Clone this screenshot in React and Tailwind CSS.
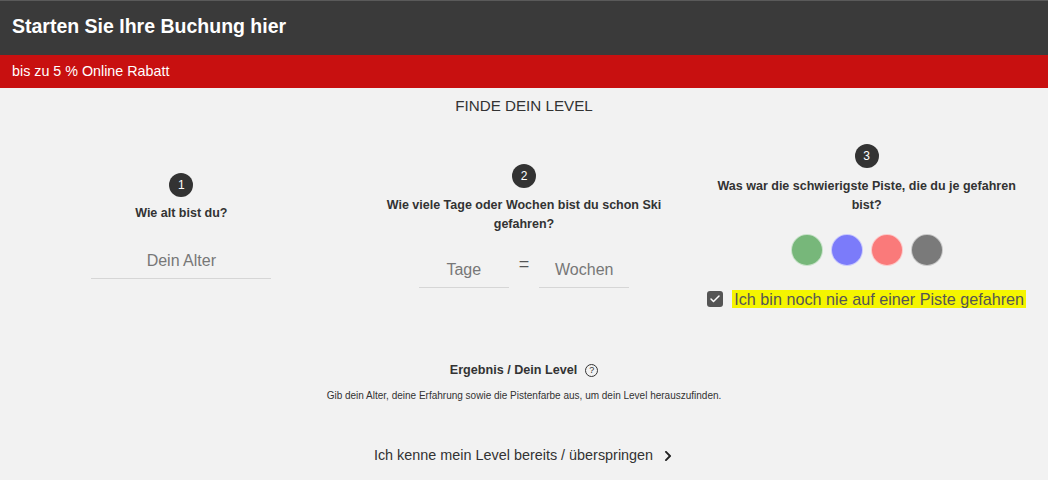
import { Check } from "lucide-react";
import { FaChevronRight } from "react-icons/fa";

const PISTEN = ["bg-[#77b77a]", "bg-[#7b7bfa]", "bg-[#fa7a7a]", "bg-[#7a7a7a]"];

function Badge({ n }) {
  return (
    <div className="w-6 h-6 rounded-full bg-[#333] text-white text-[12px] flex items-center justify-center mx-auto">
      {n}
    </div>
  );
}

function Field({ placeholder, width }) {
  return (
    <input
      className={`${width} h-9 bg-transparent border-b border-[#d6d6d6] text-center text-[16px] text-[#555] placeholder-[#777] outline-none`}
      placeholder={placeholder}
    />
  );
}

export default function App() {
  return (
    <div className="min-h-screen bg-[#f2f2f2] font-['Liberation_Sans',Arial,sans-serif] text-[#333]">
      <div className="h-[55px] bg-[#3a3a3a] border-t border-[#5a5a5a] flex items-center px-3 pb-[3px]">
        <h1 className="text-white text-[19.5px] font-bold">Starten Sie Ihre Buchung hier</h1>
      </div>
      <div className="h-[33px] bg-[#c81010] flex items-center px-3">
        <span className="text-white text-[14.3px]">bis zu 5 % Online Rabatt</span>
      </div>

      <div className="text-center text-[15.2px] text-[#333] mt-[10px] leading-4">FINDE DEIN LEVEL</div>

      <div className="grid grid-cols-3 items-center px-[10px] mt-[21px] h-[182px]">
        {/* Alter */}
        <div className="text-center">
          <Badge n={1} />
          <p className="text-[12.5px] font-bold mt-[8px] leading-4">Wie alt bist du?</p>
          <div className="flex justify-center mt-[22px]">
            <Field placeholder="Dein Alter" width="w-[180px]" />
          </div>
        </div>

        {/* Erfahrung */}
        <div className="text-center">
          <Badge n={2} />
          <p className="text-[12.5px] font-bold mt-[8px] leading-[19px] px-6">
            Wie viele Tage oder Wochen bist du schon Ski gefahren?
          </p>
          <div className="flex justify-center items-center gap-[10px] mt-[18px]">
            <Field placeholder="Tage" width="w-[90px]" />
            <span className="text-[18px] text-[#555] -mt-3">=</span>
            <Field placeholder="Wochen" width="w-[90px]" />
          </div>
        </div>

        {/* Piste */}
        <div className="text-center">
          <Badge n={3} />
          <p className="text-[12.5px] font-bold mt-[9px] leading-[19px] px-5">
            Was war die schwierigste Piste, die du je gefahren bist?
          </p>
          <div className="flex justify-center gap-2 mt-[19px]">
            {PISTEN.map((c, i) => (
              <button key={i} className={`w-8 h-8 rounded-full ${c} border border-white/60`} />
            ))}
          </div>
          <label className="flex items-center justify-center gap-[9px] mt-[24px]">
            <span className="w-4 h-4 rounded-[3px] bg-[#555] flex items-center justify-center">
              <Check size={12} strokeWidth={3} className="text-white" />
            </span>
            <span className="text-[16.2px] text-[#555] bg-[#f5f500] px-[2px] leading-[18px]">
              Ich bin noch nie auf einer Piste gefahren
            </span>
          </label>
        </div>
      </div>

      <div className="text-center mt-[44px]">
        <div className="flex items-center justify-center gap-2">
          <span className="text-[12.6px] font-bold">Ergebnis / Dein Level</span>
          <span className="w-[13px] h-[13px] rounded-full border border-[#333] text-[9px] leading-none flex items-center justify-center">?</span>
        </div>
        <p className="text-[10px] mt-[8px]">
          Gib dein Alter, deine Erfahrung sowie die Pistenfarbe aus, um dein Level herauszufinden.
        </p>
      </div>

      <div className="flex items-center justify-center gap-[9px] mt-[42px] text-[14.4px] text-[#333]">
        <span>Ich kenne mein Level bereits / überspringen</span>
        <FaChevronRight size={12} className="text-[#222]" />
      </div>
    </div>
  );
}
